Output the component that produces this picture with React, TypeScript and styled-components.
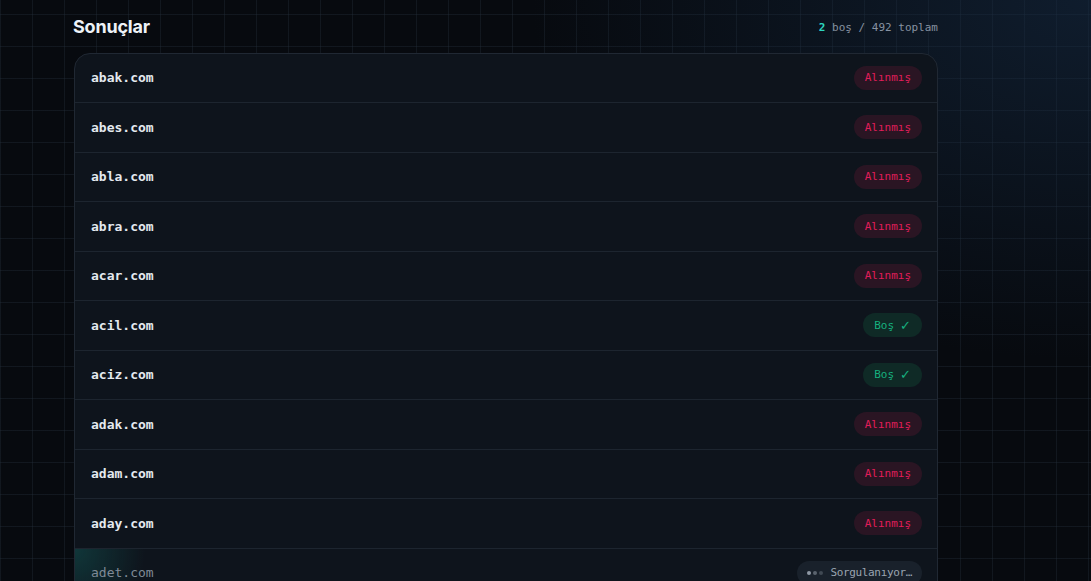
import React from "react";
import styled, { createGlobalStyle, css } from "styled-components";

const GlobalStyle = createGlobalStyle`
  html, body {
    margin: 0;
    padding: 0;
    background: #070a0f;
  }
  body {
    font-family: Inter, "Noto Sans", sans-serif;
    overflow: hidden;
  }
  * { box-sizing: border-box; }
`;

const Page = styled.div`
  min-height: 100vh;
  width: 100%;
  background-color: #070a0f;
  background-image:
    radial-gradient(ellipse 560px 360px at 100% 0%, rgba(22, 44, 70, 0.55), rgba(22, 44, 70, 0) 100%),
    linear-gradient(rgba(40, 52, 66, 0.32) 1px, transparent 1px),
    linear-gradient(90deg, rgba(40, 52, 66, 0.32) 1px, transparent 1px);
  background-size: 100% 100%, 32px 32px, 32px 32px;
  background-position: 0 0, 0 14px, 0 0;
  padding: 14px 0 0 74px;
`;

const Section = styled.section`
  width: 864px;
  display: flex;
  flex-direction: column;
  gap: 14.5px;
`;

const Header = styled.div`
  display: flex;
  align-items: center;
  justify-content: space-between;
  height: 24px;
`;

const Title = styled.h2`
  margin: 0;
  margin-left: -1px;
  font-family: Inter, "Noto Sans", sans-serif;
  font-size: 18px;
  font-weight: 700;
  letter-spacing: -0.2px;
  color: #eef3f8;
`;

const Summary = styled.div`
  font-family: "DejaVu Sans Mono", "Liberation Mono", monospace;
  font-size: 11px;
  color: #8792a1;
  padding-top: 2px;
`;

const Count = styled.span`
  color: #2dd4bf;
  font-weight: 700;
`;

const Card = styled.div`
  border: 1px solid #202833;
  border-radius: 16px;
  background: #0e141c;
  overflow: hidden;
`;

const Row = styled.div<{ $pending?: boolean }>`
  height: 49.5px;
  display: flex;
  align-items: center;
  justify-content: space-between;
  padding: 0 15px 0 16px;
  border-bottom: 1px solid #1d252f;
  ${(p) =>
    p.$pending &&
    css`
      background: radial-gradient(ellipse 70px 80px at 0% 0%, rgba(20, 110, 105, 0.38), rgba(20, 110, 105, 0) 100%),
        #0e141c;
    `}
`;

const Domain = styled.span<{ $pending?: boolean }>`
  font-family: "DejaVu Sans Mono", "Liberation Mono", monospace;
  font-size: 13px;
  font-weight: ${(p) => (p.$pending ? 400 : 700)};
  color: ${(p) => (p.$pending ? "#7f8a96" : "#e4e9ef")};
`;

type Status = "taken" | "free" | "pending";

const badgeTone: Record<Status, { bg: string; fg: string }> = {
  taken: { bg: "#2a1523", fg: "#e11d5a" },
  free: { bg: "#0f2a26", fg: "#16b07f" },
  pending: { bg: "#19212b", fg: "#9ba5b1" },
};

const Badge = styled.span<{ $status: Status }>`
  display: inline-flex;
  align-items: center;
  gap: ${(p) => (p.$status === "pending" ? "7px" : "6px")};
  height: 24px;
  padding: 0 ${(p) => (p.$status === "pending" ? "10px" : "11px")};
  border-radius: 999px;
  font-family: "DejaVu Sans Mono", "Liberation Mono", monospace;
  font-size: 11px;
  background: ${(p) => badgeTone[p.$status].bg};
  color: ${(p) => badgeTone[p.$status].fg};
`;

const Check = styled.span`
  font-family: "DejaVu Sans", sans-serif;
  font-size: 13px;
  line-height: 1;
`;

const PendingText = styled.span`
  letter-spacing: -0.35px;
`;

const Dots = styled.span`
  display: inline-flex;
  align-items: center;
  gap: 2px;
`;

const Dot = styled.span<{ $level: number }>`
  width: 4px;
  height: 4px;
  border-radius: 50%;
  background: #9ba5b1;
  opacity: ${(p) => p.$level};
`;

const rows: { name: string; status: Status }[] = [
  { name: "abak.com", status: "taken" },
  { name: "abes.com", status: "taken" },
  { name: "abla.com", status: "taken" },
  { name: "abra.com", status: "taken" },
  { name: "acar.com", status: "taken" },
  { name: "acil.com", status: "free" },
  { name: "aciz.com", status: "free" },
  { name: "adak.com", status: "taken" },
  { name: "adam.com", status: "taken" },
  { name: "aday.com", status: "taken" },
  { name: "adet.com", status: "pending" },
  { name: "adil.com", status: "pending" },
];

function StatusBadge({ status }: { status: Status }) {
  if (status === "taken") return <Badge $status="taken">Alınmış</Badge>;
  if (status === "free")
    return (
      <Badge $status="free">
        Boş<Check>✓</Check>
      </Badge>
    );
  return (
    <Badge $status="pending">
      <Dots>
        <Dot $level={0.9} />
        <Dot $level={0.5} />
        <Dot $level={0.3} />
      </Dots>
      <PendingText>Sorgulanıyor…</PendingText>
    </Badge>
  );
}

export default function App() {
  return (
    <>
      <GlobalStyle />
      <Page>
        <Section>
          <Header>
            <Title>Sonuçlar</Title>
            <Summary>
              <Count>2</Count> boş / 492 toplam
            </Summary>
          </Header>
          <Card>
            {rows.map((r) => (
              <Row key={r.name} $pending={r.status === "pending"}>
                <Domain $pending={r.status === "pending"}>{r.name}</Domain>
                <StatusBadge status={r.status} />
              </Row>
            ))}
          </Card>
        </Section>
      </Page>
    </>
  );
}
